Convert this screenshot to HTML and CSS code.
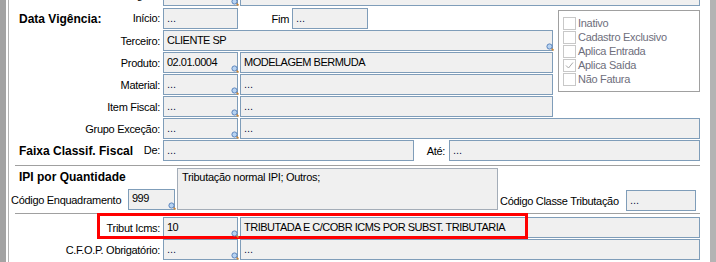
FILE: index.html
```html
<!DOCTYPE html>
<html lang="pt-BR">
<head>
  <meta charset="UTF-8">
  <title>Regra Fiscal</title>
  <link rel="stylesheet" href="styles.css">
</head>
<body>
  <div class="screen">
    <div class="frame"></div>
    <div class="form">

      <!-- linha cortada no topo -->
      <div class="row row-top">
        <div class="lbl"><span></span><span class="cut">Origem:</span></div>
        <div class="fld w-code"><svg class="mag" viewBox="0 0 8 8"><line x1="5" y1="5" x2="7.5" y2="7.5"/><circle cx="3.5" cy="3.5" r="2.6"/></svg></div>
        <div class="fld w-full gap"></div>
      </div>

      <div class="upper">
        <div class="upper-rows">
          <div class="row">
            <div class="lbl"><span class="title">Data Vigência:</span><span>Início:</span></div>
            <div class="fld w-code dots">...</div>
            <div class="lbl-inline w-fim">Fim</div>
            <div class="fld w-date dots">...</div>
          </div>
          <div class="row">
            <div class="lbl"><span></span><span>Terceiro:</span></div>
            <div class="fld w-terc">CLIENTE SP<svg class="mag" viewBox="0 0 8 8"><line x1="5" y1="5" x2="7.5" y2="7.5"/><circle cx="3.5" cy="3.5" r="2.6"/></svg></div>
          </div>
          <div class="row">
            <div class="lbl"><span></span><span>Produto:</span></div>
            <div class="fld w-code">02.01.0004<svg class="mag" viewBox="0 0 8 8"><line x1="5" y1="5" x2="7.5" y2="7.5"/><circle cx="3.5" cy="3.5" r="2.6"/></svg></div>
            <div class="fld w-desc gap">MODELAGEM BERMUDA</div>
          </div>
          <div class="row">
            <div class="lbl"><span></span><span>Material:</span></div>
            <div class="fld w-code dots">...<svg class="mag" viewBox="0 0 8 8"><line x1="5" y1="5" x2="7.5" y2="7.5"/><circle cx="3.5" cy="3.5" r="2.6"/></svg></div>
            <div class="fld w-desc gap dots">...</div>
          </div>
          <div class="row">
            <div class="lbl"><span></span><span>Item Fiscal:</span></div>
            <div class="fld w-code dots">...<svg class="mag" viewBox="0 0 8 8"><line x1="5" y1="5" x2="7.5" y2="7.5"/><circle cx="3.5" cy="3.5" r="2.6"/></svg></div>
            <div class="fld w-desc gap dots">...</div>
          </div>
        </div>

        <div class="flags">
          <div class="flag"><span class="chk"></span>Inativo</div>
          <div class="flag"><span class="chk"></span>Cadastro Exclusivo</div>
          <div class="flag"><span class="chk"></span>Aplica Entrada</div>
          <div class="flag"><span class="chk"><svg viewBox="0 0 11 11"><polyline points="2,5.5 4.5,8 9,2.5"/></svg></span>Aplica Saída</div>
          <div class="flag"><span class="chk"></span>Não Fatura</div>
        </div>
      </div>

      <div class="row">
        <div class="lbl"><span></span><span>Grupo Exceção:</span></div>
        <div class="fld w-code dots">...<svg class="mag" viewBox="0 0 8 8"><line x1="5" y1="5" x2="7.5" y2="7.5"/><circle cx="3.5" cy="3.5" r="2.6"/></svg></div>
        <div class="fld w-full gap dots">...</div>
      </div>
      <div class="row">
        <div class="lbl"><span class="title">Faixa Classif. Fiscal</span><span>De:</span></div>
        <div class="fld w-range dots">...</div>
        <div class="lbl-inline w-ate">Até:</div>
        <div class="fld w-range dots">...</div>
      </div>

      <div class="sep"></div>

      <div class="ipi">
        <div class="ipi-left">
          <div class="title ipi-title">IPI por Quantidade</div>
          <div class="enq">
            <span class="enq-lbl">Código Enquadramento</span>
            <div class="fld w-enq">999<svg class="mag" viewBox="0 0 8 8"><line x1="5" y1="5" x2="7.5" y2="7.5"/><circle cx="3.5" cy="3.5" r="2.6"/></svg></div>
          </div>
        </div>
        <div class="memo">Tributação normal IPI; Outros;</div>
        <div class="ipi-right">
          <div class="classe">
            <span class="classe-lbl">Código Classe Tributação</span>
            <div class="fld w-classe dots">...</div>
          </div>
        </div>
      </div>

      <div class="sep sep-tight"></div>

      <div class="row row-icms">
        <div class="lbl"><span></span><span>Tribut Icms:</span></div>
        <div class="fld w-code">10<svg class="mag" viewBox="0 0 8 8"><line x1="5" y1="5" x2="7.5" y2="7.5"/><circle cx="3.5" cy="3.5" r="2.6"/></svg></div>
        <div class="fld w-full gap">TRIBUTADA E C/COBR ICMS POR SUBST. TRIBUTARIA</div>
        <div class="highlight"></div>
      </div>
      <div class="row">
        <div class="lbl"><span></span><span>C.F.O.P. Obrigatório:</span></div>
        <div class="fld w-code dots">...<svg class="mag" viewBox="0 0 8 8"><line x1="5" y1="5" x2="7.5" y2="7.5"/><circle cx="3.5" cy="3.5" r="2.6"/></svg></div>
        <div class="fld w-full gap dots">...</div>
      </div>

    </div>
    <div class="scroll"></div>
  </div>
</body>
</html>
```

FILE: styles.css
```css
body {
    margin: 0;
    background: #fff;
    color: #000;
    font-family: "Liberation Sans", Arial, sans-serif;
    font-size: 11px;
    letter-spacing: -0.3px;
}
.screen {
    display: flex;
    width: 716px;
    height: 262px;
    overflow: hidden;
}
.frame {
    width: 6px;
    flex: none;
    background: #a3a3a3;
    margin-right: 2px;
}
.form {
    width: 702px;
    flex: none;
    border-left: 1px solid #b4b4b4;
    box-sizing: border-box;
}
.scroll {
    width: 6px;
    flex: none;
    background: #b4b4b4;
}

/* linhas de campos */
.row {
    display: flex;
    align-items: center;
    height: 21px;
    margin-top: 1px;
    position: relative;
}
.row-top {
    margin-top: -15px;
}
.lbl {
    width: 152px;
    flex: none;
    display: flex;
    justify-content: space-between;
    padding-left: 10px;
    padding-right: 1px;
    margin-right: 2px;
    box-sizing: border-box;
    white-space: nowrap;
}
.cut {
    position: relative;
    top: -1px;
}
.title {
    font-weight: bold;
    font-size: 12px;
    letter-spacing: 0;
}
.lbl-inline {
    flex: none;
    text-align: right;
    box-sizing: border-box;
}
.w-fim { width: 54px; padding-right: 3px; }
.w-ate { width: 35px; padding-right: 4px; }

.fld {
    position: relative;
    flex: none;
    height: 21px;
    box-sizing: border-box;
    border: 1px solid #7f9db9;
    background: #f0f0f0;
    padding: 0 3px;
    line-height: 19px;
    white-space: nowrap;
    letter-spacing: -0.5px;
}
.dots { color: #10104a; letter-spacing: 0; }
.gap { margin-left: 2px; }
.w-code { width: 75px; }
.w-date { width: 76px; }
.w-desc { width: 313px; }
.w-terc { width: 390px; }
.w-full { width: 460px; }
.w-range { width: 251px; }
.w-enq { width: 47px; margin-left: auto; margin-right: 2px; line-height: 16px; }
.w-classe { width: 70px; }

.mag {
    position: absolute;
    right: -2px;
    bottom: -1px;
    width: 8px;
    height: 8px;
    z-index: 1;
}
.mag circle {
    fill: #b7d3f2;
    stroke: #5d85bd;
    stroke-width: 1;
}
.mag line {
    stroke: #c98a3e;
    stroke-width: 1.6;
}

/* bloco superior com as opções */
.upper {
    display: flex;
    align-items: flex-start;
    margin-top: 1px;
}
.upper-rows {
    width: 544px;
    flex: none;
}
.flags {
    width: 142px;
    height: 82px;
    margin-left: 5px;
    margin-top: 3px;
    padding-top: 5px;
    border: 1px solid #a0a0a0;
    box-sizing: border-box;
    color: #6e6e7c;
}
.flag {
    display: flex;
    align-items: center;
    height: 14px;
    white-space: nowrap;
}
.chk {
    width: 13px;
    height: 13px;
    margin-left: 4px;
    margin-right: 2px;
    border: 1px solid #c8c8c8;
    box-sizing: border-box;
    background: #fff;
    flex: none;
}
.chk svg {
    display: block;
    width: 11px;
    height: 11px;
}
.chk polyline {
    fill: none;
    stroke: #a8a8a8;
    stroke-width: 1;
}

.sep {
    height: 1px;
    width: 685px;
    margin-left: 6px;
    margin-top: 4px;
    background: #a0a0a0;
}
.sep-tight {
    margin-top: 0;
}

/* IPI */
.ipi {
    display: flex;
    height: 47px;
}
.ipi-left {
    width: 168px;
    flex: none;
    display: flex;
    flex-direction: column;
}
.ipi-title {
    padding-left: 10px;
    margin-top: 4px;
    line-height: 14px;
}
.enq {
    display: flex;
    align-items: center;
    margin-top: auto;
    margin-bottom: 3px;
}
.enq-lbl {
    padding-left: 2px;
    white-space: nowrap;
}
.memo {
    width: 321px;
    height: 42px;
    flex: none;
    margin-top: 2px;
    padding: 2px 4px;
    border: 1px solid #a4adb8;
    background: #f0f0f0;
    box-sizing: border-box;
    line-height: 13px;
}
.ipi-right {
    flex: 1;
    display: flex;
    align-items: flex-end;
    padding-bottom: 2px;
}
.classe {
    flex: 1;
    display: flex;
    align-items: center;
    padding-left: 2px;
    padding-right: 14px;
}
.classe-lbl {
    white-space: nowrap;
}
.classe .fld {
    margin-left: auto;
}

/* Tribut Icms destacado */
.row-icms {
    margin-top: 3px;
}
.highlight {
    position: absolute;
    left: 88px;
    top: -4px;
    width: 431px;
    height: 26px;
    border: 3px solid #ff0000;
    box-sizing: border-box;
    pointer-events: none;
}
```
